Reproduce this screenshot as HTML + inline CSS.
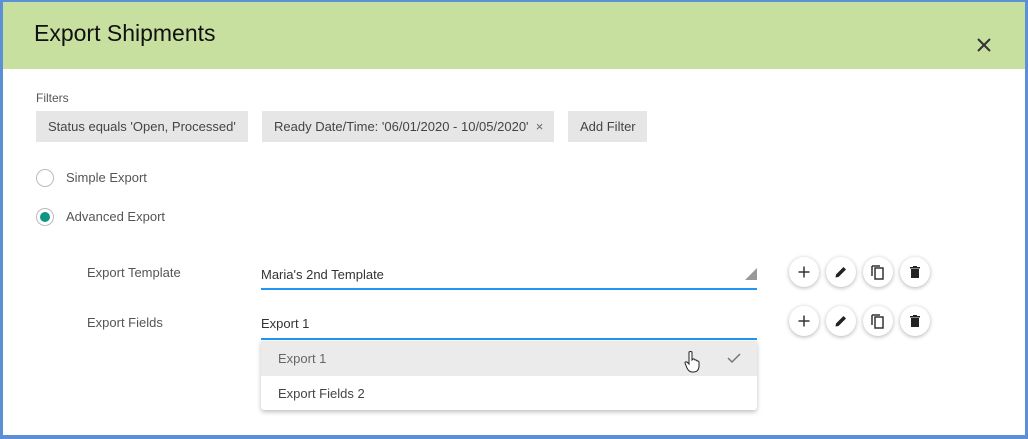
<!DOCTYPE html>
<html><head><style>
body{margin:0;width:1028px;height:439px;overflow:hidden;font-family:"Liberation Sans",sans-serif;background:#fff}
.frame{position:absolute;left:0;top:0;width:1022px;height:433px;border:3px solid #5b8fd6;border-top-width:2px;border-bottom-width:4px;}
.hdr{position:absolute;left:0;top:0;width:1022px;height:67px;background:#c8e09f}
.t{position:absolute;font-size:13px;color:#555;white-space:nowrap}
.chip{position:absolute;top:111px;height:31px;background:#e6e6e6;font-size:13px;color:#444;line-height:31px;padding:0 12px;white-space:nowrap}
.btn{position:absolute;width:30px;height:30px;border-radius:50%;background:#fff;box-shadow:0 1px 4px rgba(0,0,0,.3);display:flex;align-items:center;justify-content:center}
.radio{position:absolute;left:36px;width:16px;height:16px;border:1px solid #bbb;border-radius:50%;background:#fff}
</style></head><body>
<div class="frame">
<div class="hdr"></div>
<div style="position:absolute;left:31px;top:18px;font-size:23px;color:#111">Export Shipments</div>
<svg style="position:absolute;left:974px;top:36px" width="14" height="14"><path d="M1 1L13 13M13 1L1 13" stroke="#333" stroke-width="2"/></svg>
</div>
<div class="t" style="left:36px;top:91px;font-size:12px">Filters</div>
<div class="chip" style="left:36px;width:188px">Status equals 'Open, Processed'</div>
<div class="chip" style="left:262px;width:268px">Ready Date/Time: '06/01/2020 - 10/05/2020' &nbsp;<span style="color:#666">×</span></div>
<div class="chip" style="left:568px;width:55px">Add Filter</div>
<div class="radio" style="top:169px"></div>
<div class="t" style="left:66px;top:170px">Simple Export</div>
<div class="radio" style="top:208px"><div style="position:absolute;left:3px;top:3px;width:10px;height:10px;border-radius:50%;background:#0f9486"></div></div>
<div class="t" style="left:66px;top:209px">Advanced Export</div>
<div class="t" style="left:87px;top:265px">Export Template</div>
<div class="t" style="left:87px;top:315px">Export Fields</div>
<div class="t" style="left:261px;top:267px;color:#333">Maria's 2nd Template</div>
<svg style="position:absolute;left:745px;top:268px" width="12" height="12"><path d="M12 0V12H0Z" fill="#999"/></svg>
<div style="position:absolute;left:261px;top:288px;width:496px;height:2px;background:#2196f3"></div>
<div class="t" style="left:261px;top:316px;color:#333">Export 1</div>
<div style="position:absolute;left:261px;top:338px;width:496px;height:2px;background:#2196f3"></div>
<div style="position:absolute;left:261px;top:341px;width:496px;height:69px;background:#fff;box-shadow:0 2px 5px rgba(0,0,0,.25);border-radius:0 0 3px 3px">
<div style="height:35px;background:#ebebeb"></div></div>
<div class="t" style="left:278px;top:351px;color:#666">Export 1</div>
<div class="t" style="left:278px;top:386px;color:#444">Export Fields 2</div>
<svg style="position:absolute;left:727px;top:352px" width="14" height="12"><path d="M1 6L5 10L13 2" stroke="#777" stroke-width="1.5" fill="none"/></svg>
<svg style="position:absolute;left:684px;top:350px" width="16" height="24"><path d="M5 2Q6.5 1 8 2V10L9 9Q10.5 8.5 11 10Q12.5 9.5 13 11Q14.5 10.5 15 12V17Q14 22 10 22H8Q5 22 3 18L1 13Q1 11.5 3 12L5 14Z" fill="#fff" stroke="#222" stroke-width="1"/></svg>
<div class="btn" style="left:789px;top:257px"><svg width="14" height="14"><path d="M7 1.5V12.5M1.5 7H12.5" stroke="#333" stroke-width="1.5"/></svg></div>
<div class="btn" style="left:826px;top:257px"><svg width="14" height="14"><path d="M1.5 12.5L2 9.5L9.5 2L12 4.5L4.5 12Z" fill="#222"/></svg></div>
<div class="btn" style="left:863px;top:257px"><svg width="14" height="16"><path d="M1 2V12" stroke="#333" stroke-width="1.5"/><rect x="4" y="4" width="8" height="11" fill="none" stroke="#333" stroke-width="1.5"/><path d="M1 2H9" stroke="#333" stroke-width="1.5"/></svg></div>
<div class="btn" style="left:900px;top:257px"><svg width="12" height="14"><path d="M1 2H11V3.5H1ZM4 1H8V2H4ZM2 4H10V13H2Z" fill="#222"/></svg></div>
<div class="btn" style="left:789px;top:306px"><svg width="14" height="14"><path d="M7 1.5V12.5M1.5 7H12.5" stroke="#333" stroke-width="1.5"/></svg></div>
<div class="btn" style="left:826px;top:306px"><svg width="14" height="14"><path d="M1.5 12.5L2 9.5L9.5 2L12 4.5L4.5 12Z" fill="#222"/></svg></div>
<div class="btn" style="left:863px;top:306px"><svg width="14" height="16"><path d="M1 2V12" stroke="#333" stroke-width="1.5"/><rect x="4" y="4" width="8" height="11" fill="none" stroke="#333" stroke-width="1.5"/><path d="M1 2H9" stroke="#333" stroke-width="1.5"/></svg></div>
<div class="btn" style="left:900px;top:306px"><svg width="12" height="14"><path d="M1 2H11V3.5H1ZM4 1H8V2H4ZM2 4H10V13H2Z" fill="#222"/></svg></div>
</body></html>
